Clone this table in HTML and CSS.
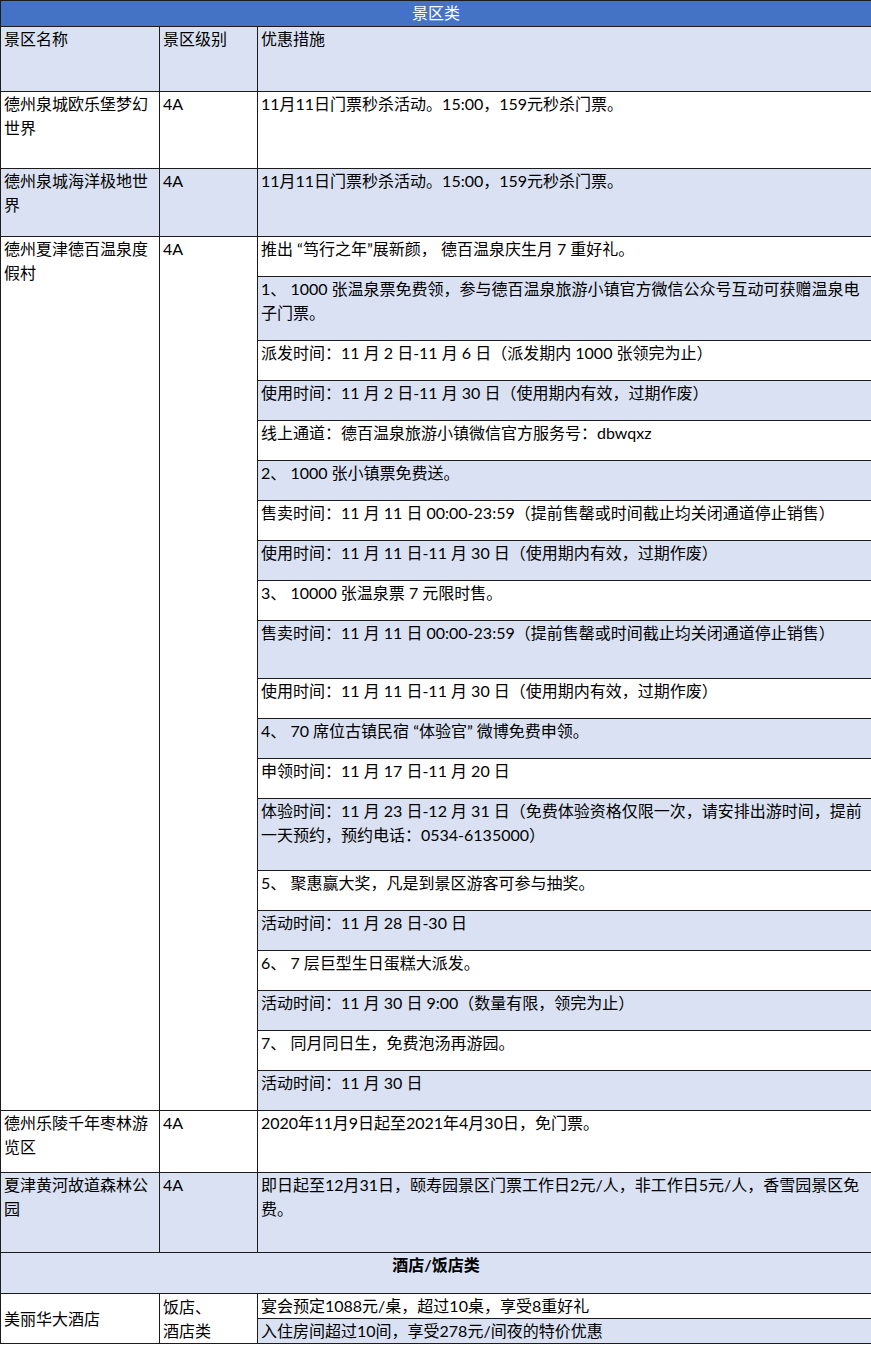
FILE: index.html
```html
<!DOCTYPE html>
<html lang="zh-CN">
<head>
<meta charset="utf-8">
<title>景区类</title>
<link rel="stylesheet" href="styles.css">
</head>
<body>
<table class="grid">
  <colgroup>
    <col class="c1">
    <col class="c2">
    <col class="c3">
  </colgroup>
  <tbody>
    <tr class="r26"><td colspan="3" class="title">景区类</td></tr>
    <tr class="r65 b"><td>景区名称</td><td>景区级别</td><td>优惠措施</td></tr>
    <tr class="r77 w"><td>德州泉城欧乐堡梦幻世界</td><td>4A</td><td>11月11日门票秒杀活动。15:00，159元秒杀门票。</td></tr>
    <tr class="r68 b"><td>德州泉城海洋极地世界</td><td>4A</td><td>11月11日门票秒杀活动。15:00，159元秒杀门票。</td></tr>

    <tr class="r40 w"><td rowspan="20" class="w">德州夏津德百温泉度假村</td><td rowspan="20" class="w">4A</td><td>推出 “笃行之年”展新颜， 德百温泉庆生月 7 重好礼。</td></tr>
    <tr class="r64 b"><td>1、 1000 张温泉票免费领，参与德百温泉旅游小镇官方微信公众号互动可获赠温泉电子门票。</td></tr>
    <tr class="r40 w"><td>派发时间：11 月 2 日-11 月 6 日（派发期内 1000 张领完为止）</td></tr>
    <tr class="r40 b"><td>使用时间：11 月 2 日-11 月 30 日（使用期内有效，过期作废）</td></tr>
    <tr class="r40 w"><td>线上通道：德百温泉旅游小镇微信官方服务号：dbwqxz</td></tr>
    <tr class="r40 b"><td>2、 1000 张小镇票免费送。</td></tr>
    <tr class="r40 w"><td>售卖时间：11 月 11 日 00:00-23:59（提前售罄或时间截止均关闭通道停止销售）</td></tr>
    <tr class="r40 b"><td>使用时间：11 月 11 日-11 月 30 日（使用期内有效，过期作废）</td></tr>
    <tr class="r40 w"><td>3、 10000 张温泉票 7 元限时售。</td></tr>
    <tr class="r58 b"><td>售卖时间：11 月 11 日 00:00-23:59（提前售罄或时间截止均关闭通道停止销售）</td></tr>
    <tr class="r40 w"><td>使用时间：11 月 11 日-11 月 30 日（使用期内有效，过期作废）</td></tr>
    <tr class="r40 b"><td>4、 70 席位古镇民宿 “体验官” 微博免费申领。</td></tr>
    <tr class="r40 w"><td>申领时间：11 月 17 日-11 月 20 日</td></tr>
    <tr class="r72 b"><td>体验时间：11 月 23 日-12 月 31 日（免费体验资格仅限一次，请安排出游时间，提前一天预约，预约电话：0534-6135000）</td></tr>
    <tr class="r40 w"><td>5、 聚惠赢大奖，凡是到景区游客可参与抽奖。</td></tr>
    <tr class="r40 b"><td>活动时间：11 月 28 日-30 日</td></tr>
    <tr class="r40 w"><td>6、 7 层巨型生日蛋糕大派发。</td></tr>
    <tr class="r40 b"><td>活动时间：11 月 30 日 9:00（数量有限，领完为止）</td></tr>
    <tr class="r40 w"><td>7、 同月同日生，免费泡汤再游园。</td></tr>
    <tr class="r40 b"><td>活动时间：11 月 30 日</td></tr>

    <tr class="r62 w"><td>德州乐陵千年枣林游览区</td><td>4A</td><td>2020年11月9日起至2021年4月30日，免门票。</td></tr>
    <tr class="r80 b"><td>夏津黄河故道森林公园</td><td>4A</td><td>即日起至12月31日，颐寿园景区门票工作日2元/人，非工作日5元/人，香雪园景区免费。</td></tr>
    <tr class="r41 b"><td colspan="3" class="section">酒店/饭店类</td></tr>
    <tr class="r25 w"><td rowspan="2" class="w mid">美丽华大酒店</td><td rowspan="2" class="w mid tight">饭店、<br>酒店类</td><td class="tight">宴会预定1088元/桌，超过10桌，享受8重好礼</td></tr>
    <tr class="r25 b"><td class="tight">入住房间超过10间，享受278元/间夜的特价优惠</td></tr>
  </tbody>
</table>
</body>
</html>
```

FILE: styles.css
```css
html, body {
  margin: 0;
  padding: 0;
  background: #ffffff;
}

.grid {
  border-collapse: collapse;
  table-layout: fixed;
  width: 871px;
  font-family: Lato, "Noto Sans CJK SC", sans-serif;
  font-size: 16px;
  line-height: 24px;
  color: #000000;
}

.c1 { width: 159px; }
.c2 { width: 98px; }
.c3 { width: 614px; }

.grid td {
  border: 1px solid #1c1c1c;
  padding: 0 3px 0 3px;
  vertical-align: top;
  text-align: left;
  box-sizing: border-box;
}

.b td, td.b { background: #d9e1f2; }
.w td, td.w { background: #ffffff; }

.grid td.title {
  background: #4472c4;
  color: #ffffff;
  text-align: center;
  padding-top: 0;
  line-height: 24px;
}

.grid td.section {
  text-align: center;
  font-weight: bold;
  padding-top: 0;
}

.grid td.mid { vertical-align: middle; }
.grid td.tight { line-height: 24px; padding-top: 0; }

.r26 { height: 26px; }
.r65 { height: 65px; }
.r77 { height: 77px; }
.r68 { height: 68px; }
.r40 { height: 40px; }
.r64 { height: 64px; }
.r58 { height: 58px; }
.r72 { height: 72px; }
.r62 { height: 62px; }
.r80 { height: 80px; }
.r41 { height: 41px; }
.r25 { height: 25px; }
```
